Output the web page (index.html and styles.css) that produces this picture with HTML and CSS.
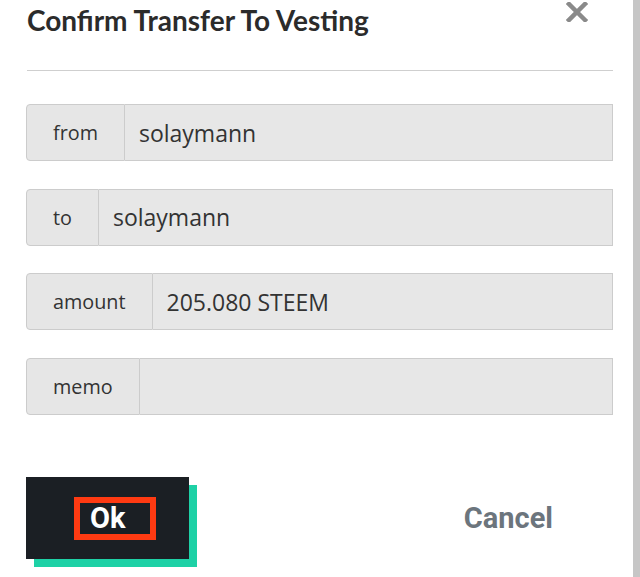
FILE: index.html
```html
<!DOCTYPE html>
<html>
<head>
<meta charset="utf-8">
<link rel="stylesheet" href="styles.css">
</head>
<body>
<div class="page">
  <div class="modal">
    <div class="header">
      <h1 class="title">Confirm Transfer To Vesting</h1>
      <span class="close">
        <svg width="22" height="20" viewBox="0 0 22 20"><path d="M3 2 L19 18 M19 2 L3 18" stroke="#8a8a8a" stroke-width="4.5" stroke-linecap="square"/></svg>
      </span>
    </div>
    <hr class="divider">
    <div class="fields">
      <div class="group"><span class="addon">from</span><span class="value">solaymann</span></div>
      <div class="group"><span class="addon">to</span><span class="value">solaymann</span></div>
      <div class="group"><span class="addon">amount</span><span class="value">205.080 STEEM</span></div>
      <div class="group"><span class="addon">memo</span><span class="value"></span></div>
    </div>
    <div class="actions">
      <div class="ok-wrap">
        <button class="ok"><span class="ok-label">Ok</span></button>
      </div>
      <button class="cancel">Cancel</button>
    </div>
  </div>
  <div class="scrollbar"></div>
</div>
</body>
</html>
```
FILE: styles.css
```css
html, body {
  margin: 0;
  padding: 0;
  background: #ffffff;
}
.page {
  display: flex;
  width: 640px;
  height: 577px;
  overflow: hidden;
}
.modal {
  flex: 1;
  padding: 0 20px 0 26px;
  font-family: "Open Sans", "Lato", sans-serif;
  color: #333;
}
.scrollbar {
  width: 7px;
  background: #c6c6c6;
}
.header {
  display: flex;
  justify-content: space-between;
  align-items: flex-start;
  height: 70px;
}
.title {
  margin: 3px 0 0 1px;
  font-family: "Lato", sans-serif;
  font-size: 28px;
  font-weight: 700;
  color: #2b2b2b;
}
.close {
  margin: 2px 25px 0 0;
  display: block;
}
.divider {
  margin: 0;
  border: 0;
  border-top: 1px solid #cfcfcf;
  margin-left: 1px;
}
.fields {
  display: flex;
  flex-direction: column;
  gap: 27.5px;
  margin-top: 33px;
}
.group {
  display: flex;
  height: 57px;
  box-sizing: border-box;
}
.addon {
  display: flex;
  align-items: center;
  padding: 0 26px 0 26px;
  background: #e6e6e6;
  border: 1px solid #cccccc;
  border-radius: 4px 0 0 4px;
  font-size: 19.8px;
  color: #333;
}
.value {
  flex: 1;
  display: flex;
  align-items: center;
  padding: 0 14px;
  background: #e7e7e7;
  border: 1px solid #cccccc;
  border-left: 0;
  font-size: 23px;
  color: #333;
}
.actions {
  display: flex;
  justify-content: space-between;
  align-items: center;
  margin-top: 62.5px;
}
.ok-wrap {
  position: relative;
  width: 163px;
  height: 82px;
}
.ok-wrap::before {
  content: "";
  position: absolute;
  left: 8px;
  top: 8px;
  width: 163px;
  height: 82px;
  background: #1ed1a6;
}
.ok {
  position: relative;
  width: 163px;
  height: 82px;
  background: #1b1f24;
  border: 0;
  padding: 0 0 0 48px;
  display: flex;
  align-items: center;
  justify-content: flex-start;
}
.ok-label {
  display: block;
  box-sizing: border-box;
  width: 82px;
  height: 43px;
  border: 6px solid #ff3a12;
  color: #ffffff;
  font-family: "Roboto", sans-serif;
  font-weight: 700;
  font-size: 29px;
  line-height: 31px;
  text-align: left;
  padding-left: 10px;
}
.cancel {
  background: none;
  border: 0;
  font-family: "Roboto", sans-serif;
  font-weight: 700;
  font-size: 29px;
  color: #6c757d;
  margin-right: 60px;
  padding: 0;
}
```
